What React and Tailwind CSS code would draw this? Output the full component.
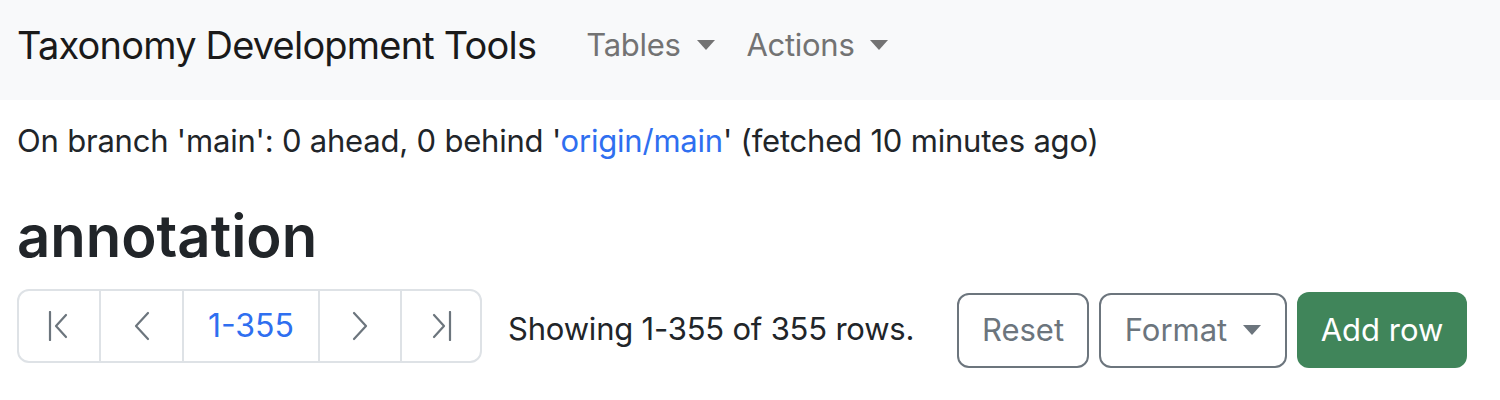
import React from "react";

const Caret = ({ className = "" }) => (
  <span
    className={`inline-block w-0 h-0 border-t-[10px] border-t-current border-x-[9px] border-x-transparent ${className}`}
  />
);

const Chev = ({ dir }) => (
  <svg width="16" height="30" viewBox="0 0 16 30" fill="none" stroke="#6c757d" strokeWidth="2.2" strokeLinecap="round" strokeLinejoin="round">
    {dir === "left" ? <path d="M14 2 L2 15 L14 28" /> : <path d="M2 2 L14 15 L2 28" />}
  </svg>
);

const First = () => (
  <svg width="22" height="30" viewBox="0 0 22 30" fill="none" stroke="#6c757d" strokeWidth="2.2" strokeLinecap="round" strokeLinejoin="round">
    <path d="M2 1 L2 29" />
    <path d="M18 4 L8 15 L18 26" />
  </svg>
);

const Last = () => (
  <svg width="22" height="30" viewBox="0 0 22 30" fill="none" stroke="#6c757d" strokeWidth="2.2" strokeLinecap="round" strokeLinejoin="round">
    <path d="M20 1 L20 29" />
    <path d="M4 4 L14 15 L4 26" />
  </svg>
);

export default function App() {
  return (
    <div className="w-[1500px] h-[400px] bg-white text-[#212529] font-['Inter','Liberation_Sans',sans-serif] overflow-hidden">
      <nav className="h-[100px] bg-[#f8f9fa] flex items-center pl-[17px] pb-[10px]">
        <span className="text-[38px] text-[#1a1a1a] tracking-[-0.8px] mr-[34px]">Taxonomy Development Tools</span>
        <div className="flex items-center text-[31px] text-[#737373]">
          <span className="flex items-center px-[16px] tracking-[-0.3px]">
            Tables<Caret className="ml-[16px]" />
          </span>
          <span className="flex items-center px-[16px] tracking-[-0.3px]">
            Actions<Caret className="ml-[16px]" />
          </span>
        </div>
      </nav>
      <div className="pl-[17px] pr-[33px]">
        <p className="mt-[17px] text-[31px] leading-[48px] tracking-[-0.2px]">
          On branch 'main': 0 ahead, 0 behind '<a className="text-[#2f6ff0]">origin/main</a>' (fetched 10 minutes ago)
        </p>
        <h2 className="mt-[38px] text-[58px] font-semibold leading-[67px] tracking-[0px]">annotation</h2>
        <div className="mt-[14px] flex items-center">
          <div className="flex h-[74px] border-2 border-[#dee2e6] rounded-[12px] text-[32px]">
            <div className="w-[80px] flex items-center justify-center"><First /></div>
            <div className="w-[83px] flex items-center justify-center border-l-2 border-[#dee2e6]"><Chev dir="left" /></div>
            <div className="w-[136px] flex items-center justify-center border-l-2 border-[#dee2e6] text-[#2f6ff0]">1-355</div>
            <div className="w-[82px] flex items-center justify-center border-l-2 border-[#dee2e6]"><Chev dir="right" /></div>
            <div className="w-[80px] flex items-center justify-center border-l-2 border-[#dee2e6]"><Last /></div>
          </div>
          <span className="ml-[26px] text-[31px] tracking-[-0.2px] mt-[6px]">Showing 1-355 of 355 rows.</span>
          <div className="ml-auto flex items-center gap-[10px] mt-[8px] text-[31px]">
            <button className="h-[75px] w-[132px] border-2 border-[#6c757d] rounded-[12px] text-[#6c757d]">Reset</button>
            <button className="h-[75px] w-[188px] border-2 border-[#6c757d] rounded-[12px] text-[#6c757d] flex items-center justify-center">
              Format<Caret className="ml-[16px]" />
            </button>
            <button className="h-[76px] w-[170px] rounded-[12px] bg-[#40855a] text-white">Add row</button>
          </div>
        </div>
      </div>
    </div>
  );
}
